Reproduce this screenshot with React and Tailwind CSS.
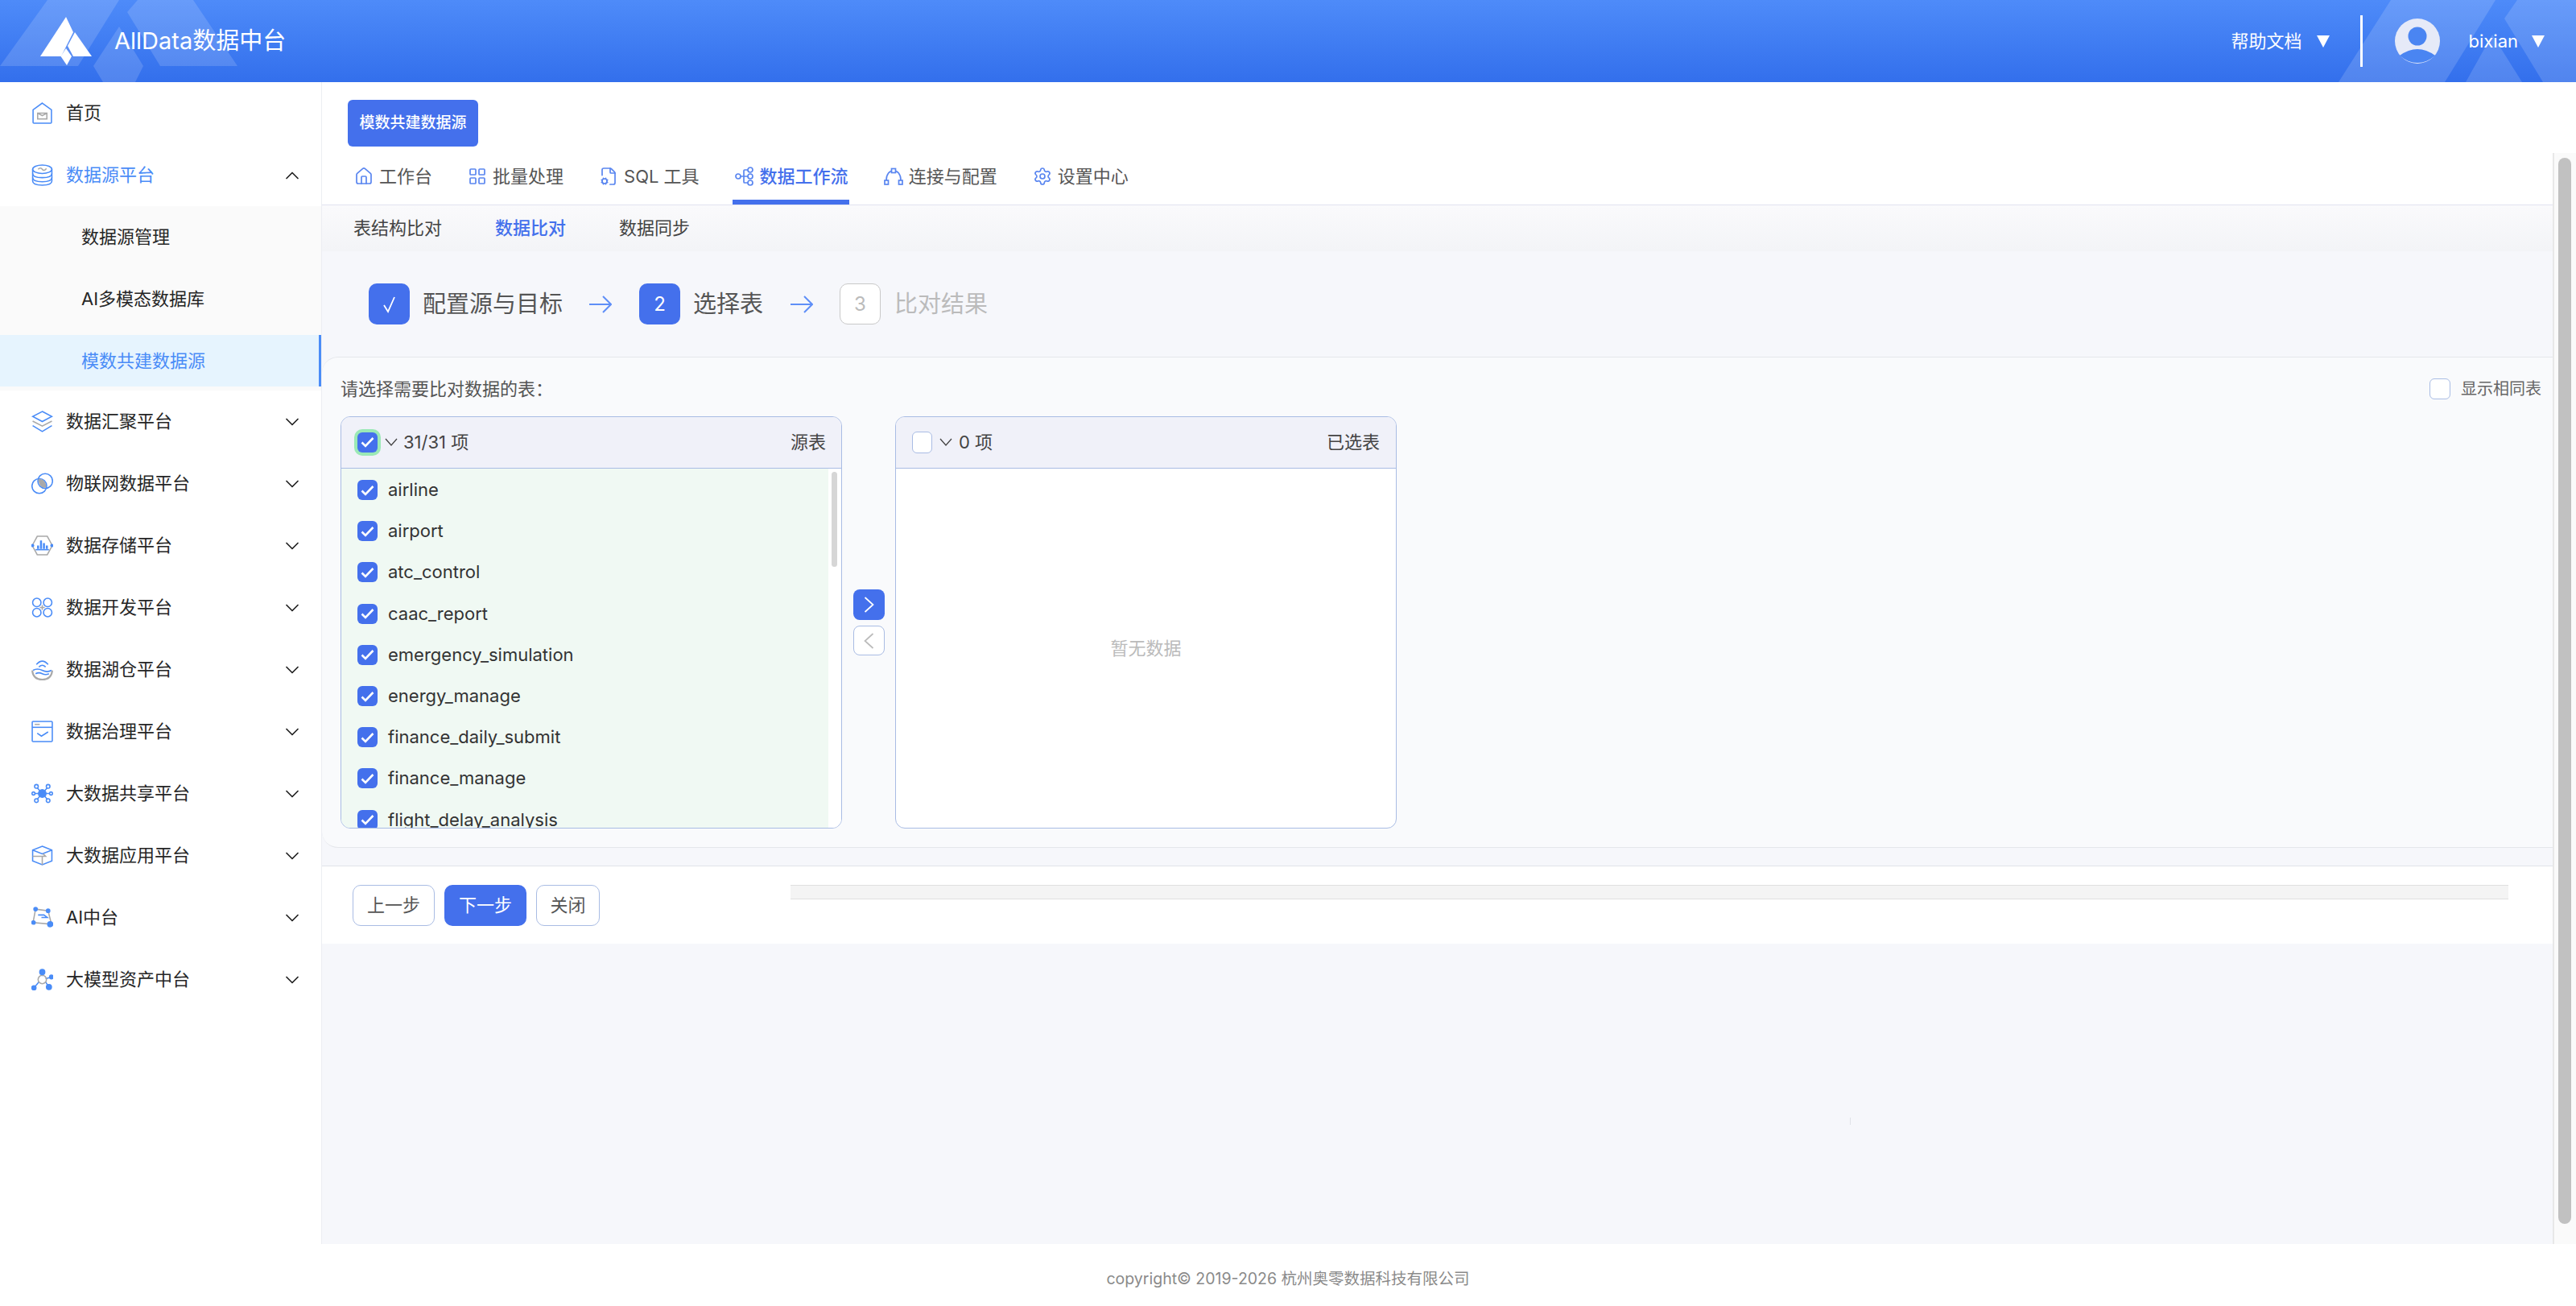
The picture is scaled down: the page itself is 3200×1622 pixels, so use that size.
import React from "react";
import { House, LayoutGrid, FileCog, Settings, ChevronDown, ChevronUp } from "lucide-react";

const blue = "#4a8cf7";
const grey = "#a9a9a9";

const Ico = ({ children }) => (
  <svg width="27" height="27" viewBox="0 0 26 26" fill="none" stroke={blue} strokeWidth="1.5" className="shrink-0">
    {children}
  </svg>
);

const menuIcons = {
  home: (
    <Ico>
      <path d="M13 1 L24 9 V24 Q24 25 23 25 H3 Q2 25 2 24 V9 Z" />
      <path d="M7.5 13 H18.5 V20 H7.5 Z M7.5 13 L13 16 L18.5 13" stroke={grey} />
    </Ico>
  ),
  db: (
    <Ico>
      <ellipse cx="13" cy="6" rx="11.5" ry="5" />
      <path d="M8 6 Q11 3 13 6 T18 5" stroke={grey} />
      <path d="M1.5 6 V11 C1.5 14 6 16 13 16 S24.5 14 24.5 11 V6" />
      <path d="M1.5 11 V16 C1.5 19 6 21 13 21 S24.5 19 24.5 16 V11" />
      <path d="M1.5 16 V20 C1.5 23 6 25 13 25 S24.5 23 24.5 20 V16" />
    </Ico>
  ),
  layers: (
    <Ico>
      <path d="M13 1 L24.5 7 L13 13 L1.5 7 Z" />
      <path d="M1.5 12.5 L13 18.5 L24.5 12.5" stroke={grey} />
      <path d="M1.5 18 L13 25 L24.5 18" />
    </Ico>
  ),
  iot: (
    <Ico>
      <circle cx="9.5" cy="16" r="8.8" />
      <circle cx="16.5" cy="10" r="8.8" />
      <path d="M8.5 7.5 C14 7 18 11 17.5 18 C12 19 8 14 8.5 7.5 Z" fill={grey} stroke="none" />
    </Ico>
  ),
  storage: (
    <Ico>
      <path d="M1 13 L7 2 H19 L25 13 L19 24 H7 Z" stroke={grey} />
      <path d="M8 17 V13 M11.5 17 V7 M15 17 V10 M18.5 17 V13" strokeWidth="2.4" />
      <path d="M5 18 H21" />
      <circle cx="1.5" cy="13" r="1.2" fill={blue} />
      <circle cx="24.5" cy="13" r="1.2" fill={blue} />
    </Ico>
  ),
  dev: (
    <Ico>
      <circle cx="6.5" cy="7" r="5" />
      <circle cx="19.5" cy="7" r="5" />
      <circle cx="6.5" cy="19" r="5" />
      <circle cx="19.5" cy="19" r="5" />
      <path d="M13 10 V16 M10 13 H16" stroke={grey} />
    </Ico>
  ),
  lake: (
    <Ico>
      <path d="M6 7 Q13 -1 20 7 M9 10 Q13 6 17 10" />
      <path d="M1 14 Q2 25 13 25 T25 14" stroke={grey} strokeWidth="2" />
      <path d="M2 14 Q7 11 13 14 T24 14 M5 18 Q9 16 13 18 T21 18" />
    </Ico>
  ),
  govern: (
    <Ico>
      <rect x="1" y="1" width="24" height="24" rx="1" />
      <path d="M1 8 H25" />
      <path d="M4 4.5 H10" stroke={grey} />
      <path d="M7 15 L12 18.5 L20 13.5" />
    </Ico>
  ),
  share: (
    <Ico>
      <circle cx="13" cy="13" r="4.5" fill={blue} />
      <path d="M13 13 L6 5 M13 13 L20 5 M13 13 L6 21 M13 13 L20 21 M13 13 L2 13 M13 13 L24 13" />
      <circle cx="6" cy="4.5" r="2.2" fill="#fff" />
      <circle cx="20" cy="4.5" r="2.2" fill="#fff" />
      <circle cx="6" cy="21.5" r="2.2" fill="#fff" />
      <circle cx="20" cy="21.5" r="2.2" fill="#fff" />
      <circle cx="2.5" cy="13" r="1.8" fill="#fff" />
      <circle cx="23.5" cy="13" r="1.8" fill="#fff" />
    </Ico>
  ),
  app: (
    <Ico>
      <path d="M13 2 L24.5 6.5 V19.5 L13 24 L1.5 19.5 V6.5 Z" />
      <path d="M1.5 6.5 L13 11 L24.5 6.5" />
      <path d="M1.5 14 H17 L14 11 M13 14 V24" stroke={grey} />
    </Ico>
  ),
  ai: (
    <Ico>
      <path d="M5 3 L20 5 L24 21 L2 19 Z" stroke={grey} />
      <path d="M8 10 H15 L19 13 H12" />
      <circle cx="5" cy="3" r="2" fill={blue} />
      <circle cx="20" cy="5" r="2" fill={blue} />
      <circle cx="2.5" cy="19" r="2" fill={blue} />
      <circle cx="22.5" cy="21" r="3" fill={blue} />
    </Ico>
  ),
  model: (
    <Ico>
      <path d="M13 4 L13 9 M9 16 L3 23 M17 12 L24 10 M17 16 L21 22" />
      <circle cx="13" cy="13" r="5" stroke={grey} />
      <circle cx="13" cy="4" r="3" fill={blue} />
      <circle cx="3" cy="23" r="2.5" fill={blue} />
      <circle cx="24" cy="10" r="2.2" fill={blue} />
      <circle cx="21" cy="22" r="3" fill={blue} />
    </Ico>
  ),
};

const menus = [
  ["数据汇聚平台", "layers"],
  ["物联网数据平台", "iot"],
  ["数据存储平台", "storage"],
  ["数据开发平台", "dev"],
  ["数据湖仓平台", "lake"],
  ["数据治理平台", "govern"],
  ["大数据共享平台", "share"],
  ["大数据应用平台", "app"],
  ["AI中台", "ai"],
  ["大模型资产中台", "model"],
];

const tables = [
  "airline",
  "airport",
  "atc_control",
  "caac_report",
  "emergency_simulation",
  "energy_manage",
  "finance_daily_submit",
  "finance_manage",
  "flight_delay_analysis",
];

const Check = () => (
  <svg width="17" height="14" viewBox="0 0 17 14" fill="none" stroke="#fff" strokeWidth="2.6">
    <path d="M1.5 7.5 L6 12 L15.5 2" />
  </svg>
);

const Box = ({ ring }) => (
  <span className={`w-[25px] h-[25px] rounded-[6px] bg-[#4470ec] flex items-center justify-center shrink-0 ${ring ? "ring-[4px] ring-[#9be9b6]" : ""}`}>
    <Check />
  </span>
);

const Arrow = () => (
  <svg width="28" height="24" viewBox="0 0 28 24" fill="none" stroke="#5f8ff7" strokeWidth="2">
    <path d="M0 12 H27 M17 2 L27 12 L17 22" />
  </svg>
);

function SideItem({ text, icon, active, up }) {
  return (
    <div className="h-[77px] pl-[39px] pr-[22px] flex items-center">
      {menuIcons[icon]}
      <span className={`ml-[16px] flex-1 ${active ? "text-[#4a8cf7]" : "text-[#262626]"}`}>{text}</span>
      {up ? <ChevronUp size={28} color="#222" strokeWidth={1.5} /> : up === false ? <ChevronDown size={28} color="#222" strokeWidth={1.5} /> : null}
    </div>
  );
}

function Tab({ icon, text, active }) {
  return (
    <div className={`h-[64px] pl-[3px] pr-[1px] flex items-center gap-[7px] border-b-[6px] ${active ? "border-[#4470ec] text-[#4470ec] font-medium" : "border-transparent text-[#555]"}`}>
      {icon}
      <span>{text}</span>
    </div>
  );
}

export default function App() {
  return (
    <div className="relative w-[3200px] h-[1622px] flex flex-col overflow-hidden bg-white text-[22px] font-[Inter,'Noto_Sans_CJK_SC',sans-serif]">
      <header className="relative h-[102px] shrink-0 flex items-center pl-[50px] pr-[39px] text-white bg-gradient-to-b from-[#4e8bf9] to-[#336fec]">
        <svg className="absolute inset-0" width="3200" height="102" fill="#fff" fillOpacity="0.15">
          <polygon points="59,0 148,0 97,82 0,82" />
          <polygon points="158,15 171,0 240,0 295,82 199,82" />
          <polygon points="148,33 178,82 168,102 128,102 116,82" />
          <polygon points="2970,0 3100,0 3037,102 2905,102" />
          <polygon points="3127,0 3111,23 3159,102 3200,102 3200,0" />
          <polygon points="3063,102 3133,102 3096,43" />
        </svg>
        <svg className="relative shrink-0" width="64" height="60" viewBox="50 14 64 60" fill="#fff">
          <polygon points="82,14 50,63 76,63 91,33" />
          <polygon points="93,33 114,63 91,63 84,50" />
          <polygon points="82,53 89,63 83,74 75.5,63" />
        </svg>
        <span className="relative ml-[28px] text-[29px]">AllData数据中台</span>
        <div className="relative ml-auto flex items-center">
          <span>帮助文档</span>
          <span className="ml-[18px] w-0 h-0 border-x-[8px] border-x-transparent border-t-[15px] border-t-white" />
          <span className="ml-[38px] w-[3px] h-[64px] bg-white" />
          <svg className="ml-[40px]" width="56" height="56" viewBox="0 0 56 56">
            <circle cx="28" cy="28" r="28" fill="#e6eaf8" />
            <circle cx="28" cy="22" r="11.5" fill="#4a85f2" />
            <path d="M6 46 Q28 30 50 46 Q40 55 28 55 Q16 55 6 46 Z" fill="#4a85f2" />
          </svg>
          <span className="ml-[36px]">bixian</span>
          <span className="ml-[17px] w-0 h-0 border-x-[8px] border-x-transparent border-t-[15px] border-t-white" />
        </div>
      </header>

      <div className="flex flex-1 min-h-0">
        <aside className="w-[400px] shrink-0 border-r border-[#eceef3] bg-white">
          <SideItem text="首页" icon="home" />
          <SideItem text="数据源平台" icon="db" active up />
          <div className="bg-[#fafafa] pt-[6px] pb-[5px] flex flex-col gap-[13px] text-[#262626]">
            <div className="h-[64px] pl-[101px] flex items-center">数据源管理</div>
            <div className="h-[64px] pl-[101px] flex items-center">AI多模态数据库</div>
            <div className="h-[64px] pl-[101px] flex items-center bg-[#e6f4fe] text-[#4a8cf7] border-r-[3px] border-[#4a8cf7]">模数共建数据源</div>
          </div>
          {menus.map(([text, icon]) => (
            <SideItem key={text} text={text} icon={icon} up={false} />
          ))}
        </aside>

        <main className="flex-1 min-w-0 flex flex-col">
          <div className="h-[88px] shrink-0 pl-[32px] pt-[22px]">
            <button className="w-[162px] h-[58px] rounded-[6px] bg-[#4470ec] text-white text-[19px] font-medium">模数共建数据源</button>
          </div>

          <div className="flex h-[1355px] shrink-0">
            <div className="flex-1 min-w-0 bg-[#f6f7fb] flex flex-col">
              <div className="h-[65px] shrink-0 bg-white border-b border-[#e1e3f0] pl-[37px] flex gap-[40px]">
                <Tab icon={<House size={24} color="#5a86f0" strokeWidth={1.7} />} text="工作台" />
                <Tab icon={<LayoutGrid size={24} color="#5a86f0" strokeWidth={1.7} />} text="批量处理" />
                <Tab icon={<FileCog size={24} color="#5a86f0" strokeWidth={1.7} />} text="SQL 工具" />
                <Tab
                  active
                  icon={
                    <svg width="24" height="24" viewBox="0 0 24 24" fill="none" stroke="#5a86f0" strokeWidth="1.7">
                      <circle cx="4" cy="12" r="3" />
                      <circle cx="19" cy="4" r="3" />
                      <circle cx="19" cy="12" r="3" />
                      <circle cx="19" cy="20" r="3" />
                      <path d="M7 12 H16 M11 12 V5 Q11 4 12 4 H16 M11 12 V19 Q11 20 12 20 H16" />
                    </svg>
                  }
                  text="数据工作流"
                />
                <Tab
                  icon={
                    <svg width="24" height="24" viewBox="0 0 24 24" fill="none" stroke="#5a86f0" strokeWidth="1.7">
                      <path d="M3 17 C3 9 7 5 12 5 C17 5 21 9 21 17" />
                      <rect x="9.5" y="2.5" width="5" height="5" fill="#fff" />
                      <rect x="1" y="17" width="4.5" height="5" fill="#fff" />
                      <rect x="18.5" y="17" width="4.5" height="5" fill="#fff" />
                    </svg>
                  }
                  text="连接与配置"
                />
                <Tab icon={<Settings size={24} color="#5a86f0" strokeWidth={1.7} />} text="设置中心" />
              </div>

              <div className="h-[57px] shrink-0 pl-[39px] flex items-center gap-[66px] text-[#444] bg-gradient-to-b from-[#fafafc] to-[#f3f4f7]">
                <span>表结构比对</span>
                <span className="text-[#4470ec] font-medium">数据比对</span>
                <span>数据同步</span>
              </div>

              <div className="h-[131px] shrink-0 pl-[58px] flex items-center text-[29px] text-[#555]">
                <span className="w-[51px] h-[51px] rounded-[10px] bg-[#4470ec] flex items-center justify-center">
                  <svg width="18" height="22" viewBox="0 0 18 22" fill="none" stroke="#fff" strokeWidth="1.8">
                    <path d="M2 12 L7 20 L15 2" />
                  </svg>
                </span>
                <span className="ml-[16px]">配置源与目标</span>
                <span className="ml-[33px] flex"><Arrow /></span>
                <span className="ml-[34px] w-[51px] h-[51px] rounded-[10px] bg-[#4470ec] text-white text-[24px] flex items-center justify-center">2</span>
                <span className="ml-[16px]">选择表</span>
                <span className="ml-[34px] flex"><Arrow /></span>
                <span className="ml-[33px] w-[51px] h-[51px] rounded-[10px] bg-white border border-[#c9c9c9] text-[#bbb] text-[24px] flex items-center justify-center">3</span>
                <span className="ml-[17px] text-[#bbb]">比对结果</span>
              </div>

              <section className="h-[610px] shrink-0 bg-[#f9fafc] border-y border-[#e5e7eb] rounded-l-[20px] pl-[23px] pr-[14px] pt-[24px]">
                <div className="h-[49px] flex justify-between text-[#555] leading-[30px]">
                  <span>请选择需要比对数据的表：</span>
                  <span className="flex items-center h-[30px] text-[#666] text-[20px]">
                    <span className="w-[26px] h-[26px] rounded-[6px] bg-white border border-[#a9bce4]" />
                    <span className="ml-[13px]">显示相同表</span>
                  </span>
                </div>
                <div className="flex items-center">
                  <div className="w-[623px] h-[512px] border border-[#a9bce4] rounded-[12px] overflow-hidden flex flex-col">
                    <div className="h-[64px] shrink-0 bg-[#f0f1f9] border-b border-[#a9bce4] pl-[20px] pr-[19px] pb-[1px] flex items-center text-[#444]">
                      <Box ring />
                      <svg className="ml-[9px]" width="16" height="10" viewBox="0 0 16 10" fill="none" stroke="#444" strokeWidth="1.3"><path d="M1 1 L8 9 L15 1" /></svg>
                      <span className="ml-[7px]">31/31 项</span>
                      <span className="ml-auto">源表</span>
                    </div>
                    <div className="flex-1 min-h-0 flex">
                      <div className="flex-1 bg-[#f0f9f3] overflow-hidden pt-[1px]">
                        {tables.map((t) => (
                          <div key={t} className="h-[51.2px] pl-[20px] flex items-center text-[#333]">
                            <Box />
                            <span className="ml-[13px]">{t}</span>
                          </div>
                        ))}
                      </div>
                      <div className="w-[16px] pl-[4px] pt-[4px] bg-white">
                        <div className="w-[7px] h-[118px] rounded-[4px] bg-[#d6d6d6]" />
                      </div>
                    </div>
                  </div>

                  <div className="w-[66px] flex flex-col items-center gap-[7px]">
                    <button className="w-[39px] h-[38px] rounded-[8px] bg-[#4470ec] flex items-center justify-center">
                      <svg width="13" height="20" viewBox="0 0 13 20" fill="none" stroke="#fff" strokeWidth="1.7">
                        <path d="M1.5 1 L11.5 10 L1.5 19" />
                      </svg>
                    </button>
                    <button className="w-[39px] h-[37px] rounded-[8px] bg-white border border-[#a9bce4] flex items-center justify-center">
                      <svg width="13" height="20" viewBox="0 0 13 20" fill="none" stroke="#bbb" strokeWidth="1.7">
                        <path d="M11.5 1 L1.5 10 L11.5 19" />
                      </svg>
                    </button>
                  </div>

                  <div className="w-[623px] h-[512px] border border-[#a9bce4] rounded-[12px] overflow-hidden flex flex-col bg-white">
                    <div className="h-[64px] shrink-0 bg-[#f0f1f9] border-b border-[#a9bce4] pl-[20px] pr-[20px] pb-[1px] flex items-center text-[#444]">
                      <span className="w-[25px] h-[27px] rounded-[6px] bg-white border border-[#a9bce4]" />
                      <svg className="ml-[9px]" width="16" height="10" viewBox="0 0 16 10" fill="none" stroke="#444" strokeWidth="1.3"><path d="M1 1 L8 9 L15 1" /></svg>
                      <span className="ml-[8px]">0 项</span>
                      <span className="ml-auto">已选表</span>
                    </div>
                    <div className="flex-1 flex items-center justify-center text-[#bbb]">暂无数据</div>
                  </div>
                </div>
              </section>

              <div className="h-[22px] shrink-0" />
              <div className="h-[97px] shrink-0 bg-white border-t border-[#e1e3e8] pl-[38px] pt-[23px] flex gap-[12px] text-[#555]">
                <button className="w-[102px] h-[51px] rounded-[10px] bg-white border border-[#a9bce4]">上一步</button>
                <button className="w-[102px] h-[51px] rounded-[10px] bg-[#4470ec] text-white">下一步</button>
                <button className="w-[79px] h-[51px] rounded-[10px] bg-white border border-[#a9bce4]">关闭</button>
                <div className="ml-[225px] w-[2134px] h-[18px] bg-[#f4f4f4] border-y border-[#e0e0e0]" />
              </div>
            </div>

            <div className="w-[29px] shrink-0 border-l-2 border-[#e8e8e8] bg-[#fafafa] pl-[5px] pt-[6px]">
              <div className="w-[16px] h-[1324px] rounded-[8px] bg-[#c1c1c1]" />
            </div>
          </div>
        </main>
      </div>

      <footer className="h-[77px] shrink-0 pt-[11px] flex items-center justify-center text-[19.5px] text-[#8a8a8a]">
        copyright© 2019-2026 杭州奥零数据科技有限公司
      </footer>

      <div className="absolute left-[2298px] top-[1388px] w-px h-[9px] bg-[#e0e2e8]" />
    </div>
  );
}
